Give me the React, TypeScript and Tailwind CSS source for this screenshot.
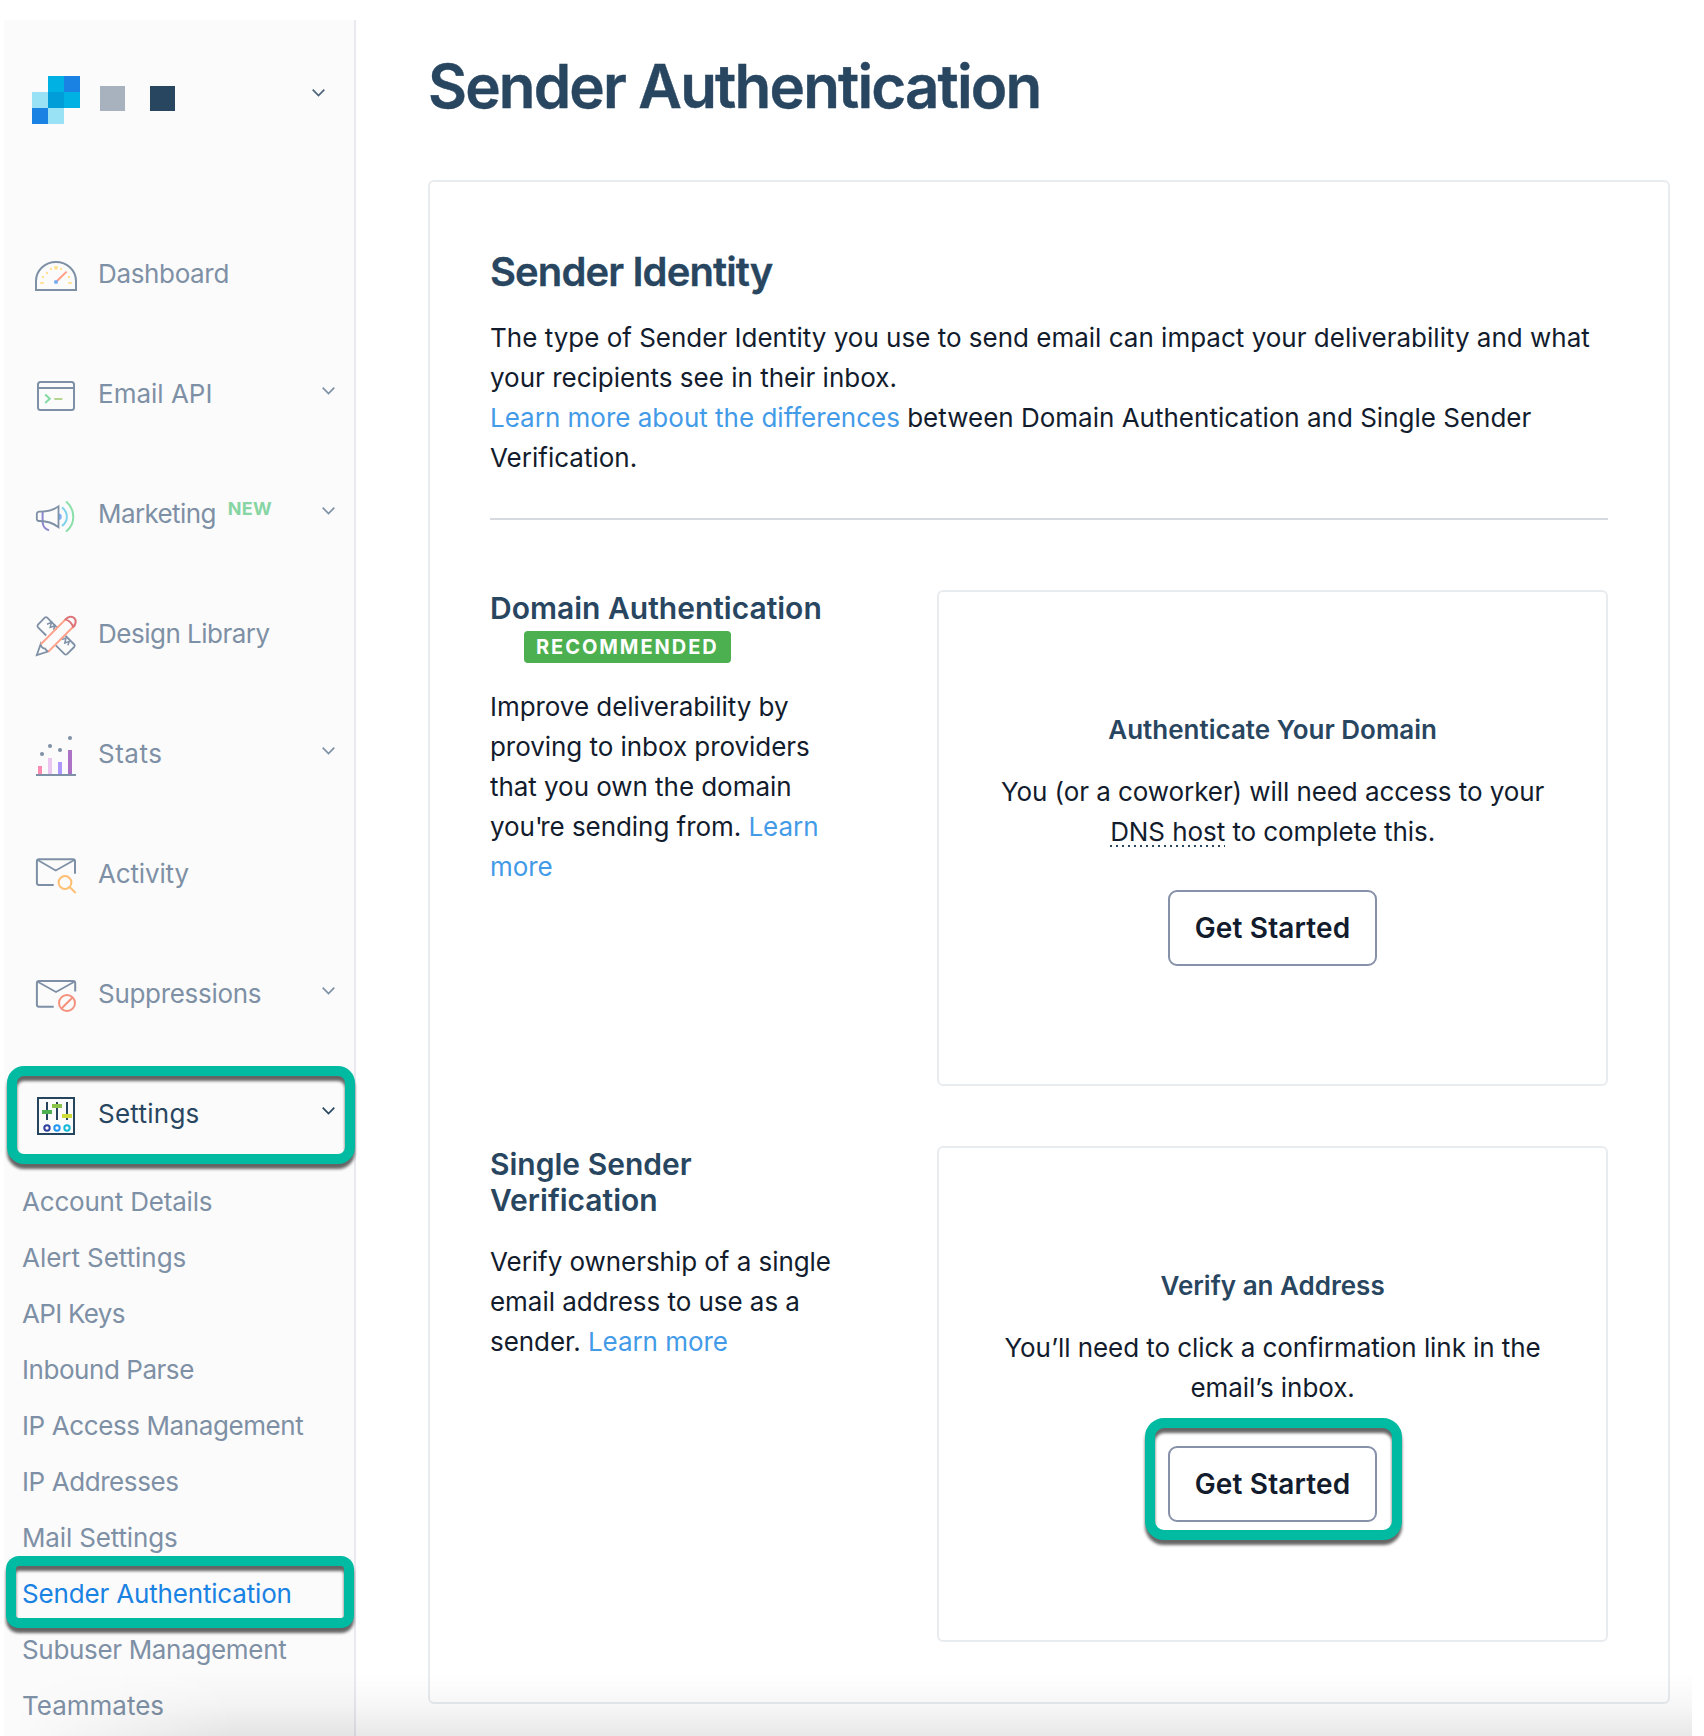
import type { ReactNode } from "react";

const GRAY = "#7e90a5";

function Chevron({ color, className }: { color: string; className?: string }) {
  return (
    <svg width="13" height="8" viewBox="0 0 13 8" fill="none" className={className}>
      <path d="M0.7 0.7L6.5 6.6L12.3 0.7" stroke={color} strokeWidth="1.7" />
    </svg>
  );
}

function Icon({ children }: { children: ReactNode }) {
  return (
    <svg width="48" height="48" viewBox="0 0 48 48" fill="none" strokeWidth="2" className="shrink-0">
      {children}
    </svg>
  );
}

const icons = {
  dashboard: (
    <Icon>
      <path d="M4 40V31C4 20.5 13 12 24 12S44 20.5 44 31V40Z" stroke={GRAY} />
      <g fill="#ffe18f">
        <circle cx="24" cy="17.8" r="2" />
        <circle cx="19" cy="19" r="1.2" />
        <circle cx="29" cy="19" r="1.2" />
        <circle cx="15" cy="23" r="1.2" />
        <circle cx="11" cy="27" r="1.2" />
        <circle cx="37" cy="27" r="1.2" />
        <rect x="8" y="32" width="4" height="2" rx="1" />
        <rect x="36" y="32" width="4" height="2" rx="1" />
      </g>
      <path d="M24 32L34.6 21.6" stroke="#ff9d85" />
      <circle cx="24" cy="32" r="2.1" fill="#79adf3" />
    </Icon>
  ),
  api: (
    <Icon>
      <rect x="6" y="12" width="36" height="28" rx="2.5" stroke={GRAY} />
      <path d="M6 18H42" stroke={GRAY} />
      <path d="M13.2 24.6L17.8 28.8L13.2 33" stroke="#82dba4" />
      <path d="M22.3 29H30.3" stroke="#b5d690" />
    </Icon>
  ),
  marketing: (
    <Icon>
      <path d="M10.6 22V32C10.8 36 13 39 17 40.4" stroke="#8d87cf" />
      <path d="M26.6 23.6A3.2 3.2 0 1 1 26.6 30Z" fill="#7fb3f5" />
      <path d="M26.5 16.4V37.2C21 33 14 31 8 31H7A2.2 2.2 0 0 1 4.8 28.8V24A2.4 2.4 0 0 1 7.2 21.6H8C14 21.6 21 20.5 26.5 16.4Z" stroke={GRAY} strokeWidth="1.8" />
      <path d="M30 17.4C36.5 22.5 36.5 31 30 36" stroke="#80d3ec" />
      <path d="M34.7 12C43.5 20 43.5 33.5 34.7 41" stroke="#8bdfa9" strokeLinecap="round" />
    </Icon>
  ),
  design: (
    <Icon>
      <g stroke={GRAY} strokeWidth="1.8">
        <path d="M25.3 17.8L15.2 7.7Q14 6.6 12.8 7.7L6 14.6Q4.8 16 6 17.3L14.2 25.5" />
        <path d="M23.8 35.3L32.6 44.1Q33.8 45.2 35 44.1L42.2 37Q43.4 35.7 42.2 34.5L33.4 25.7" />
        <path d="M15 14.2L19.4 12.4L18.2 17.4L22.8 15.8L21.6 19.8" strokeWidth="1.5" />
        <path d="M29.6 29.6L34 28L32.8 33L37.2 31.4L36 35.2" strokeWidth="1.5" />
        <path d="M8.6 34.2L4.8 45L16 41.5C14.5 40.5 13.4 40 13.2 38.6C11.4 38.6 9.4 37.4 8.6 34.2Z" />
      </g>
      <path d="M33.6 9.4L8.8 34.2M41.2 16.8L16.4 41.6" stroke="#ffa28c" />
      <path d="M33.6 9.4C36 6 40.5 6.2 42.4 8.2C44.5 10.4 43.9 14.6 41.2 16.9C39.8 13.4 37.3 10.6 33.6 9.4Z" stroke="#dd7277" />
    </Icon>
  ),
  stats: (
    <Icon>
      <rect x="6" y="36" width="4" height="8" fill="#ff8bb1" />
      <rect x="16" y="28" width="4" height="16" fill="#eac6f0" />
      <rect x="26" y="32" width="4" height="12" fill="#ad96ff" />
      <rect x="36" y="20" width="4" height="24" fill="#ab72c5" />
      <path d="M4 45H44" stroke={GRAY} />
      <g fill={GRAY}>
        <circle cx="10" cy="24" r="2" />
        <circle cx="18" cy="16" r="2" />
        <circle cx="28" cy="20" r="2" />
        <circle cx="38" cy="8" r="2" />
      </g>
    </Icon>
  ),
  activity: (
    <Icon>
      <path d="M21.7 35H7Q4.9 35 4.9 33V11.3Q4.9 9.3 7 9.3H41Q43 9.3 43 11.3V23.7" stroke={GRAY} />
      <path d="M5.7 10L23.7 20.5L42.3 10" stroke={GRAY} strokeWidth="1.7" />
      <circle cx="33" cy="32.5" r="6.4" stroke="#ffbf73" />
      <path d="M37.6 37L43.7 43" stroke="#ffbf73" />
    </Icon>
  ),
  suppressions: (
    <Icon>
      <path d="M21.7 36.8H7Q4.9 36.8 4.9 34.8V13Q4.9 11 7 11H41Q43.2 11 43.2 13V21.5" stroke={GRAY} />
      <path d="M5.7 11.7L24 22L42.3 11.7" stroke={GRAY} strokeWidth="1.7" />
      <circle cx="35" cy="33" r="8" stroke="#f3917d" />
      <path d="M29.5 38.5L40.5 27.5" stroke="#f3917d" />
    </Icon>
  ),
  settings: (
    <Icon>
      <rect x="6" y="8" width="36" height="36" stroke="#25455f" />
      <path d="M15 12V30M25 12V30M35 12V30" stroke="#25455f" />
      <rect x="10" y="20" width="10" height="4" fill="#4caf50" />
      <rect x="20" y="14" width="10" height="4" fill="#8bc34a" />
      <rect x="30" y="24" width="10" height="4" fill="#cddc39" />
      <circle cx="15" cy="38" r="2.7" stroke="#303f9f" />
      <circle cx="25" cy="38" r="2.7" stroke="#2196f3" />
      <circle cx="35" cy="38" r="2.7" stroke="#12b9d6" />
    </Icon>
  ),
};

type NavItem = { label: string; icon: ReactNode; tracking: string; menu?: boolean; isNew?: boolean; active?: boolean };

const nav: NavItem[] = [
  { label: "Dashboard", icon: icons.dashboard, tracking: "tracking-[-0.35px]" },
  { label: "Email API", icon: icons.api, tracking: "tracking-[0px]", menu: true },
  { label: "Marketing", icon: icons.marketing, tracking: "tracking-[-0.6px]", menu: true, isNew: true },
  { label: "Design Library", icon: icons.design, tracking: "tracking-[-0.5px]" },
  { label: "Stats", icon: icons.stats, tracking: "tracking-[0.5px]", menu: true },
  { label: "Activity", icon: icons.activity, tracking: "tracking-[-0.15px]" },
  { label: "Suppressions", icon: icons.suppressions, tracking: "tracking-[-0.3px]", menu: true },
  { label: "Settings", icon: icons.settings, tracking: "tracking-[0.25px]", menu: true, active: true },
];

const settingsMenu = [
  { label: "Account Details", tracking: "tracking-[-0.2px]" },
  { label: "Alert Settings", tracking: "tracking-[-0.05px]" },
  { label: "API Keys", tracking: "tracking-[-0.7px]" },
  { label: "Inbound Parse", tracking: "tracking-[-0.45px]" },
  { label: "IP Access Management", tracking: "tracking-[-0.4px]" },
  { label: "IP Addresses", tracking: "tracking-[-0.42px]" },
  { label: "Mail Settings", tracking: "tracking-[-0.15px]" },
  { label: "Sender Authentication", tracking: "tracking-[-0.17px]", active: true },
  { label: "Subuser Management", tracking: "tracking-[-0.33px]" },
  { label: "Teammates", tracking: "tracking-[0px]" },
];

function Highlight({ className }: { className: string }) {
  return (
    <div
      className={`pointer-events-none absolute z-10 border-[10px] border-[#00bba1] [filter:drop-shadow(0_5px_1.5px_rgba(0,0,0,0.6))] ${className}`}
    />
  );
}

function Logo() {
  const cells = ["", "bg-[#00b2e3]", "bg-[#1a82e2]", "bg-[#99e1f4]", "bg-[#009dd9]", "bg-[#00b2e3]", "bg-[#1a82e2]", "bg-[#99e1f4]", ""];
  return (
    <div className="grid size-12 grid-cols-3">
      {cells.map((c, i) => (
        <span key={i} className={c} />
      ))}
    </div>
  );
}

function Sidebar() {
  return (
    <aside className="mt-5 ml-1 h-[1716px] w-[352px] shrink-0 border-r-2 border-[#e9e9f0] bg-[#fbfbfb] text-[26px] leading-10 text-[#7e90a5]">
      <div className="flex h-[194px] items-start pt-14 pl-7">
        <Logo />
        <span className="mt-2.5 ml-5 size-[25px] bg-[#a8b2be]" />
        <span className="mt-2.5 ml-[25px] size-[25px] bg-[#294661]" />
        <Chevron color="#4c637b" className="mt-[12.5px] ml-[137px]" />
      </div>
      <nav>
        {nav.map((n) => (
          <div key={n.label} className={`relative flex h-[120px] items-center pr-[19px] pl-7 ${n.active ? "text-[#294661]" : ""}`}>
            {n.icon}
            <span className={`ml-[18px] ${n.tracking}`}>{n.label}</span>
            {n.isNew && <span className="-mt-[11px] ml-3 text-[18px] font-bold tracking-[0.3px] text-[#86d5a3]">NEW</span>}
            {n.menu && <Chevron color={n.active ? "#294661" : "#7e90a5"} className="mb-[7px] ml-auto" />}
            {n.active && <Highlight className="top-3 left-[3px] h-[98px] w-[348px] rounded-[17px]" />}
          </div>
        ))}
      </nav>
      <ul>
        {settingsMenu.map((s) => (
          <li key={s.label} className={`relative flex h-14 items-center pl-[18px] ${s.active ? "text-[#1a82e2]" : ""}`}>
            <span className={s.tracking}>{s.label}</span>
            {s.active && <Highlight className="-top-2.5 left-0.5 h-[72px] w-[348px] rounded-[13px]" />}
          </li>
        ))}
      </ul>
    </aside>
  );
}

function Link({ children }: { children: ReactNode }) {
  return <a className="text-[#439be8]">{children}</a>;
}

function Option(props: { title: ReactNode; text: ReactNode; boxTitle: string; boxText: ReactNode; highlighted?: boolean }) {
  return (
    <section className="flex h-[496px] justify-between">
      <div className="w-[345px]">
        <h3 className="h-[72px] text-[30px] leading-9 font-semibold text-[#294661]">{props.title}</h3>
        <p className="mt-6 tracking-[-0.05px]">{props.text}</p>
      </div>
      <div className="flex w-[60%] flex-col items-center justify-center rounded-md border-2 border-[#e9ecef] text-center">
        <h4 className="font-semibold text-[#294661]">{props.boxTitle}</h4>
        <p className="mt-[22px] w-[560px] tracking-[-0.07px]">{props.boxText}</p>
        <div className="relative mt-[38px]">
          <button className="h-[76px] w-[209px] rounded-[9px] border-2 border-[#8891aa] bg-white text-[28px] font-semibold tracking-[0.15px] text-[#121c2d]">
            Get Started
          </button>
          {props.highlighted && <Highlight className="-top-7 -left-[23px] h-[122px] w-[257px] rounded-[19px]" />}
        </div>
      </div>
    </section>
  );
}

export default function App() {
  return (
    <div className="relative flex h-[1736px] w-[1704px] overflow-hidden bg-white font-['Inter','Liberation_Sans',sans-serif]">
      <Sidebar />
      <main className="ml-[72px] w-[1242px] pt-[50px] text-[26px] leading-10 text-[#121c2d]">
        <h1 className="text-[60px] leading-[72px] font-semibold tracking-[-1.82px] text-[#294661] [-webkit-text-stroke:0.4px_#294661]">
          Sender Authentication
        </h1>
        <div className="mt-[58px] h-[1524px] rounded-md border-2 border-[#e9ecef] p-[60px]">
          <h2 className="text-[40px] leading-[60px] font-semibold tracking-[-0.9px] text-[#294661] [-webkit-text-stroke:0.3px_#294661]">
            Sender Identity
          </h2>
          <p className="mt-4">
            The type of Sender Identity you use to send email can impact your deliverability and what your recipients see in their inbox.
            <br />
            <Link>Learn more about the differences</Link> between Domain Authentication and Single Sender Verification.
          </p>
          <hr className="mt-10 border-t-2 border-[#d6dade]" />
          <div className="mt-[70px] flex flex-col gap-[60px]">
            <Option
              title={
                <>
                  Domain Authentication
                  <span className="mt-[5px] ml-[34px] flex h-8 w-[207px] items-center rounded bg-[#4caf50] pl-3 text-[20px] font-bold tracking-[1.95px] text-white">
                    RECOMMENDED
                  </span>
                </>
              }
              text={
                <span className="mt-[25px] block">
                  Improve deliverability by proving to inbox providers that you own the domain you
                  <span className="tracking-[-2.5px]">'</span>re sending from. <Link>Learn more</Link>
                </span>
              }
              boxTitle="Authenticate Your Domain"
              boxText={
                <>
                  You (or a coworker) will need access to your{" "}
                  <span className="bg-[repeating-linear-gradient(to_right,#294661_0_2px,transparent_2px_6px)] bg-[length:100%_2px] bg-[position:left_bottom] bg-no-repeat">
                    DNS host
                  </span>{" "}
                  to complete this.
                </>
              }
            />
            <Option
              title="Single Sender Verification"
              text={
                <>
                  Verify ownership of a single email address to use as a sender. <Link>Learn more</Link>
                </>
              }
              boxTitle="Verify an Address"
              boxText="You’ll need to click a confirmation link in the email’s inbox."
              highlighted
            />
          </div>
        </div>
      </main>
      <div className="pointer-events-none absolute bottom-0 left-1 h-16 w-[1688px] bg-linear-to-b from-black/0 via-black/[0.03] to-black/[0.09] [mask-image:linear-gradient(to_right,transparent_10px,black_230px)]" />
    </div>
  );
}
